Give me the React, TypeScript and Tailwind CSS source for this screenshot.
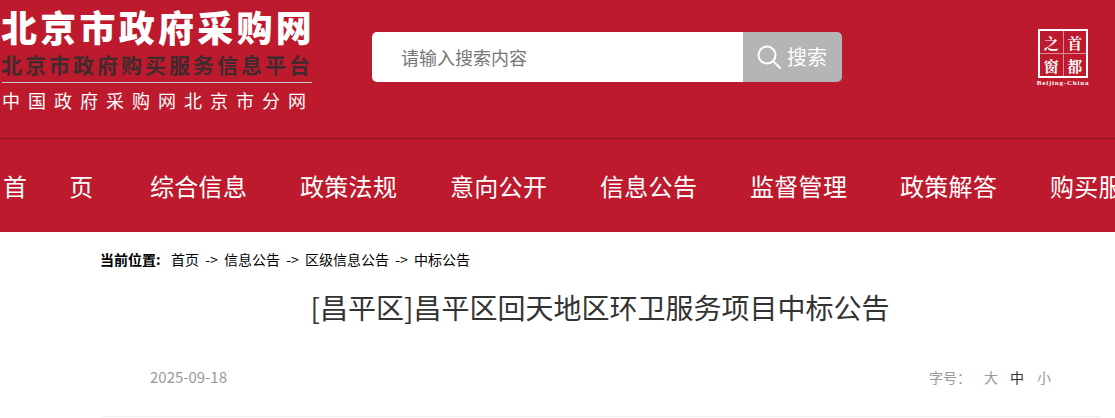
import React from "react";

const NAV_ITEMS = ["综合信息", "政策法规", "意向公开", "信息公告", "监督管理", "政策解答", "购买服务"];
const CRUMBS = ["首页", "信息公告", "区级信息公告", "中标公告"];
const FONT = "font-['Microsoft_YaHei','Noto_Sans_CJK_SC','Liberation_Sans',sans-serif]";

function Logo(): JSX.Element {
  return (
    <div className="w-[313px] shrink-0 pl-[1px]">
      <div className="h-[50px] pt-[8px] text-[36px] leading-[36px] font-black tracking-[3.25px] whitespace-nowrap text-white">
        北京市政府采购网
      </div>
      <div className="h-[32px] text-[21px] leading-[28px] font-bold tracking-[3px] whitespace-nowrap text-[#3f2a2e]">
        北京市政府购买服务信息平台
      </div>
      <div className="ml-[1px] h-px w-[310px] bg-[#c9ccd2]" />
      <div className="mt-[5px] pl-[1px] text-[18px] leading-[24px] tracking-[8px] whitespace-nowrap text-white">
        中国政府采购网北京市分网
      </div>
    </div>
  );
}

function SearchBox(): JSX.Element {
  return (
    <div className="ml-[59px] mt-[32px] flex h-[50px] w-[470px] shrink-0 overflow-hidden rounded-[5px]">
      <div className="flex w-[371px] items-center bg-white pl-[29px] text-[18px] text-[#777]">
        请输入搜索内容
      </div>
      <div className="flex w-[99px] items-center bg-[#b5b5b5] pl-[14px] text-[20px] text-white">
        <svg width="24" height="24" viewBox="0 0 24 24" fill="none" stroke="white" strokeWidth="2" className="mr-[6px]">
          <circle cx="10" cy="10" r="8.5" />
          <path d="M16 16l7 7" strokeLinecap="round" />
        </svg>
        搜索
      </div>
    </div>
  );
}

function Emblem(): JSX.Element {
  return (
    <div className="ml-[195px] mt-[29px] flex w-[52px] shrink-0 flex-col items-center">
      <div className="grid h-[49px] w-[50px] grid-cols-2 grid-rows-2 gap-px border-2 border-white bg-[#e08a98] font-['Noto_Serif_CJK_SC','Noto_Sans_CJK_SC',serif] text-[15px] leading-none font-bold text-white">
        <div className="flex items-center justify-center bg-[#bd1a2d]">之</div>
        <div className="flex items-center justify-center bg-[#bd1a2d]">首</div>
        <div className="flex items-center justify-center bg-[#bd1a2d]">窗</div>
        <div className="flex items-center justify-center bg-[#bd1a2d]">都</div>
      </div>
      <div className="mt-px font-['Liberation_Serif',serif] text-[7px] leading-[8px] font-bold tracking-[0.8px] whitespace-nowrap text-white">
        Beijing-China
      </div>
    </div>
  );
}

function Nav(): JSX.Element {
  return (
    <nav className="flex h-[93px] items-center overflow-hidden bg-[#bd1a2d] pt-[1px] text-[24px] tracking-[0.3px] text-white">
      <div className="flex w-[150px] shrink-0 pl-[3px]">
        <span>首</span>
        <span className="ml-[42px]">页</span>
      </div>
      {NAV_ITEMS.map((item) => (
        <div key={item} className="w-[150px] shrink-0 whitespace-nowrap">
          {item}
        </div>
      ))}
    </nav>
  );
}

function Breadcrumb(): JSX.Element {
  return (
    <div className="flex h-[20px] items-center text-[14px] whitespace-nowrap text-black">
      <b className="mr-[9px] w-[62px]">当前位置:</b>
      {CRUMBS.map((crumb, index) => (
        <span key={crumb}>
          {crumb}
          {index < CRUMBS.length - 1 && <span className="mx-[5px] inline-block w-[15px] text-center">-&gt;</span>}
        </span>
      ))}
    </div>
  );
}

export default function App(): JSX.Element {
  return (
    <div className={`h-[418px] w-[1115px] overflow-hidden bg-white ${FONT}`}>
      <header className="flex h-[138px] items-start bg-[#bd1a2d]">
        <Logo />
        <SearchBox />
        <Emblem />
      </header>
      <div className="h-px bg-[#8a1522]" />
      <Nav />
      <main className="ml-[100px] w-[1000px] pt-[17px]">
        <Breadcrumb />
        <h1 className="mt-[18px] text-center text-[28px] leading-[40px] font-normal whitespace-nowrap text-[#333]">
          [昌平区]昌平区回天地区环卫服务项目中标公告
        </h1>
        <div className="mt-[40px] flex h-[20px] items-center pr-[49px] pl-[50px] text-[14px] text-[#999]">
          <span className="text-[15px]">2025-09-18</span>
          <span className="ml-auto">字号：</span>
          <span className="ml-[13px]">大</span>
          <span className="ml-[12px] text-[#333]">中</span>
          <span className="ml-[13px]">小</span>
        </div>
        <div className="mt-[29px] ml-[3px] border-t border-dotted border-[#ddd]" />
      </main>
    </div>
  );
}
